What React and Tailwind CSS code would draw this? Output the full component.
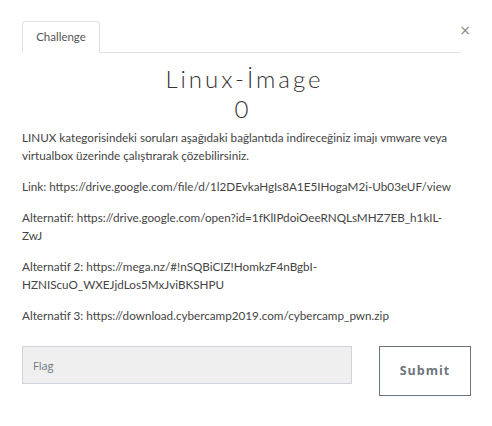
import React from "react";

export default function App() {
  return (
    <div className="w-[492px] h-[426px] bg-white relative">
      <div className="pt-[21px] pl-[22px] pr-[31px] font-['Lato','Liberation_Sans',sans-serif]">
        {/* Tabs */}
        <div className="flex items-end border-b border-[#dee2e6]">
          <div className="h-[32px] w-[78px] -mb-px border border-[#dee2e6] border-b-white bg-white rounded-t-[3px] flex items-center justify-center text-[11.5px] text-[#555]">
            Challenge
          </div>
        </div>

        {/* Title */}
        <div className="text-center mt-[12px]">
          <h1 className="text-[24px] leading-[28px] font-light tracking-[3px] text-[#333] pl-[6px]">
            Linux-İmage
          </h1>
          <div className="mt-[2px] text-[24px] leading-[28px] font-light text-[#333]">0</div>
        </div>

        {/* Description */}
        <div className="mt-[5px] text-[11.7px] leading-[18px] text-[#444] space-y-[13px]">
          <p>
            LINUX kategorisindeki soruları aşağıdaki bağlantıda indireceğiniz imajı vmware veya virtualbox üzerinde çalıştırarak çözebilirsiniz.
          </p>
          <p>Link: https://drive.google.com/file/d/1l2DEvkaHgIs8A1E5IHogaM2i-Ub03eUF/view</p>
          <p className="break-words">
            Alternatif: https://drive.google.com/open?id=1fKlIPdoiOeeRNQLsMHZ7EB_h1kIL-ZwJ
          </p>
          <p>
            Alternatif 2: https://mega.nz/#!nSQBiCIZ!HomkzF4nBgbI-HZNIScuO_WXEJjdLos5MxJviBKSHPU
          </p>
          <p>Alternatif 3: https://download.cybercamp2019.com/cybercamp_pwn.zip</p>
        </div>

        {/* Form */}
        <div className="flex items-start mt-[22px]">
          <input
            placeholder="Flag"
            className="shrink-0 w-[330px] h-[38px] bg-[#efefef] border border-[#ced4da] px-[10px] text-[11px] font-['Open_Sans','Liberation_Sans',sans-serif] text-[#555] placeholder:text-[#6c757d] outline-none"
          />
          <button className="shrink-0 ml-[27px] w-[92px] h-[50px] border border-[#6c757d] bg-white text-[12.5px] font-bold tracking-[1px] text-[#6c757d] font-['Open_Sans','Liberation_Sans',sans-serif]">
            Submit
          </button>
        </div>
      </div>

      {/* Close */}
      <button className="absolute top-[23px] right-[21px] text-[14px] leading-none text-[#888] font-['DejaVu_Sans',sans-serif]">
        ×
      </button>
    </div>
  );
}
